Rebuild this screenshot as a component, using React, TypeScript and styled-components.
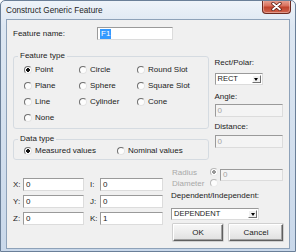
import React from 'react';
import styled, { createGlobalStyle } from 'styled-components';

const GlobalStyle = createGlobalStyle`
  html, body {
    margin: 0;
    padding: 0;
    background: #ffffff;
  }
  * {
    box-sizing: border-box;
  }
`;

const Window = styled.div`
  width: 296px;
  height: 252px;
  display: flex;
  flex-direction: column;
  background: linear-gradient(180deg, #eef3f9 0%, #dde7f2 10%, #c9d8ea 100%);
  border: 1px solid #6a7f98;
  border-radius: 5px 5px 0 0;
  font-family: "Liberation Sans", Arial, sans-serif;
  font-size: 8px;
  color: #1b1b1b;
  overflow: hidden;
`;

const TitleBar = styled.div`
  height: 18px;
  display: flex;
  align-items: flex-start;
  justify-content: space-between;
  padding-left: 5px;
`;

const Title = styled.div`
  font-size: 8.2px;
  line-height: 10px;
  margin-top: 5px;
  color: #1e1e1e;
`;

const CloseButton = styled.div`
  width: 29px;
  height: 14px;
  margin-right: 4px;
  margin-top: -1px;
  display: flex;
  align-items: center;
  justify-content: center;
  border: 1px solid #6e2a20;
  border-top: none;
  border-radius: 0 0 4px 4px;
  background: linear-gradient(180deg, #e9a899 0%, #d9705c 45%, #c0432c 55%, #d1664f 100%);
  box-shadow: inset 0 0 0 1px rgba(255, 255, 255, 0.35);
`;

const Client = styled.div`
  width: 284px;
  height: 230px;
  margin-left: 5px;
  background: #f0f0f0;
  border: 1px solid #8ea2b9;
  padding: 7px 6px 0 6px;
  display: flex;
  flex-direction: column;
`;

const NameRow = styled.div`
  display: flex;
  align-items: center;
  height: 13px;
`;

const NameLabel = styled.span`
  width: 84px;
  line-height: 10px;
`;

const TextInput = styled.div<{ $w: number; $h?: number; $disabled?: boolean }>`
  width: ${(p) => p.$w}px;
  height: ${(p) => p.$h ?? 13}px;
  display: flex;
  align-items: center;
  padding-left: 2px;
  background: ${(p) => (p.$disabled ? '#f4f4f4' : '#ffffff')};
  color: ${(p) => (p.$disabled ? '#a3a3a3' : '#1b1b1b')};
  border: 1px solid;
  border-color: #9a9a9a #dcdcdc #dcdcdc #9a9a9a;
  line-height: 10px;
`;

const Selected = styled.span`
  background: #3399ff;
  color: #ffffff;
  padding: 0 1px;
`;

const Middle = styled.div`
  display: flex;
  margin-top: 11px;
`;

const LeftCol = styled.div`
  width: 197px;
  display: flex;
  flex-direction: column;
`;

const Group = styled.fieldset<{ $pad: number }>`
  margin: 0;
  padding: 0 0 ${(p) => p.$pad}px 0;
  border: 1px solid #d5dbe1;
  border-radius: 3px;
  & + & {
    margin-top: 5px;
  }
`;

const Legend = styled.legend`
  margin-left: 4px;
  padding: 0 2px;
  line-height: 10px;
`;

const RadioGrid = styled.div<{ $cols: string; $row: number }>`
  display: grid;
  grid-template-columns: ${(p) => p.$cols};
  grid-auto-rows: ${(p) => p.$row}px;
  padding-left: 10px;
  padding-top: 1px;
`;

const RadioItem = styled.label<{ $disabled?: boolean }>`
  display: flex;
  align-items: center;
  gap: 3px;
  line-height: 10px;
  color: ${(p) => (p.$disabled ? '#a3a3a3' : 'inherit')};
`;

const RadioDot = styled.span<{ $on?: boolean; $disabled?: boolean }>`
  width: 8px;
  height: 8px;
  border-radius: 50%;
  flex: none;
  border: 1px solid;
  border-color: ${(p) => (p.$disabled ? '#b8b8b8 #ececec #ececec #b8b8b8' : '#6f6f6f #e4e4e4 #e4e4e4 #6f6f6f')};
  background: ${(p) =>
    p.$on
      ? `radial-gradient(circle, ${p.$disabled ? '#9a9a9a' : '#111'} 0 1.6px, #fff 2px)`
      : '#fdfdfd'};
`;

const RightCol = styled.div`
  margin-left: 6px;
  width: 69px;
  padding-top: 7px;
  display: flex;
  flex-direction: column;
`;

const FieldLabel = styled.div<{ $mt?: number }>`
  line-height: 10px;
  margin-top: ${(p) => p.$mt ?? 0}px;
`;

const Spaced = styled.div<{ $mt: number }>`
  margin-top: ${(p) => p.$mt}px;
`;

const Combo = styled.div<{ $w: number }>`
  width: ${(p) => p.$w}px;
  height: 12px;
  display: flex;
  align-items: center;
  justify-content: space-between;
  background: #ffffff;
  border: 1px solid;
  border-color: #9a9a9a #dcdcdc #dcdcdc #9a9a9a;
  padding: 0 1px 0 2px;
  font-size: 7.5px;
  line-height: 10px;
`;

const DropButton = styled.span`
  width: 9px;
  height: 8px;
  display: flex;
  align-items: center;
  justify-content: center;
  background: #f0f0f0;
  border: 1px solid;
  border-color: #ffffff #707070 #707070 #ffffff;
`;

const Triangle = styled.span`
  width: 0;
  height: 0;
  border-left: 2.5px solid transparent;
  border-right: 2.5px solid transparent;
  border-top: 3px solid #000000;
`;

const Bottom = styled.div`
  display: flex;
  margin-top: 1px;
`;

const Coords = styled.div`
  display: grid;
  grid-template-columns: 10px 61px 16px 63px;
  grid-auto-rows: 13px;
  row-gap: 4px;
  margin-top: 17px;
  align-items: center;
`;

const CoordLabel = styled.span<{ $pl?: number }>`
  line-height: 10px;
  padding-left: ${(p) => p.$pl ?? 0}px;
`;

const RightBottom = styled.div`
  margin-left: 8px;
  width: 112px;
  margin-top: 6px;
  display: flex;
  flex-direction: column;
`;

const SizeRow = styled.div`
  display: flex;
  align-items: flex-start;
`;

const SizeLabels = styled.div`
  width: 39px;
  padding-left: 1px;
  display: flex;
  flex-direction: column;
  color: #a8a8a8;
  line-height: 11px;
`;

const SizeRadios = styled.div`
  width: 10px;
  display: flex;
  flex-direction: column;
  gap: 3px;
  padding-top: 1px;
`;

const ButtonRow = styled.div`
  display: flex;
  gap: 6px;
  margin-top: 4px;
  margin-left: 2px;
`;

const Button = styled.button<{ $w: number }>`
  width: ${(p) => p.$w}px;
  height: 17px;
  padding: 0;
  font-family: inherit;
  font-size: 8px;
  color: #1b1b1b;
  background: linear-gradient(180deg, #f6f6f6 0%, #ececec 50%, #e0e0e0 100%);
  border: 1px solid;
  border-color: #ffffff #5f5f5f #5f5f5f #ffffff;
  box-shadow: inset -1px -1px 0 #a0a0a0, 0 0 0 0.5px #b0b0b0;
`;

const featureTypes = [
  ['Point', 'Circle', 'Round Slot'],
  ['Plane', 'Sphere', 'Square Slot'],
  ['Line', 'Cylinder', 'Cone'],
  ['None'],
];

const App = () => {
  return (
    <>
      <GlobalStyle />
      <Window>
        <TitleBar>
          <Title>Construct Generic Feature</Title>
          <CloseButton>
            <svg width="11" height="9" viewBox="0 0 11 9">
              <path d="M2 1.5 L9 7.5 M9 1.5 L2 7.5" stroke="#5a1d14" strokeWidth="3.4" strokeLinecap="round" />
              <path d="M2 1.5 L9 7.5 M9 1.5 L2 7.5" stroke="#ffffff" strokeWidth="1.8" strokeLinecap="round" />
            </svg>
          </CloseButton>
        </TitleBar>
        <Client>
          <NameRow>
            <NameLabel>Feature name:</NameLabel>
            <TextInput $w={76}>
              <Selected>F1</Selected>
            </TextInput>
          </NameRow>

          <Middle>
            <LeftCol>
              <Group $pad={2}>
                <Legend>Feature type</Legend>
                <RadioGrid $cols="55px 58px auto" $row={16}>
                  {featureTypes.flat().map((name) => (
                    <RadioItem key={name}>
                      <RadioDot $on={name === 'Point'} />
                      {name}
                    </RadioItem>
                  ))}
                </RadioGrid>
              </Group>
              <Group $pad={2}>
                <Legend>Data type</Legend>
                <RadioGrid $cols="93px auto" $row={12}>
                  <RadioItem>
                    <RadioDot $on />
                    Measured values
                  </RadioItem>
                  <RadioItem>
                    <RadioDot />
                    Nominal values
                  </RadioItem>
                </RadioGrid>
              </Group>
            </LeftCol>

            <RightCol>
              <FieldLabel>Rect/Polar:</FieldLabel>
              <Spaced $mt={5}>
                <Combo $w={48}>
                  RECT
                  <DropButton>
                    <Triangle />
                  </DropButton>
                </Combo>
              </Spaced>
              <FieldLabel $mt={7}>Angle:</FieldLabel>
              <Spaced $mt={2}>
                <TextInput $w={68} $disabled>0</TextInput>
              </Spaced>
              <FieldLabel $mt={5}>Distance:</FieldLabel>
              <Spaced $mt={3}>
                <TextInput $w={68} $disabled>0</TextInput>
              </Spaced>
            </RightCol>
          </Middle>

          <Bottom>
            <Coords>
              <CoordLabel>X:</CoordLabel>
              <TextInput $w={61}>0</TextInput>
              <CoordLabel $pl={6}>I:</CoordLabel>
              <TextInput $w={63}>0</TextInput>
              <CoordLabel>Y:</CoordLabel>
              <TextInput $w={61}>0</TextInput>
              <CoordLabel $pl={6}>J:</CoordLabel>
              <TextInput $w={63}>0</TextInput>
              <CoordLabel>Z:</CoordLabel>
              <TextInput $w={61}>0</TextInput>
              <CoordLabel $pl={6}>K:</CoordLabel>
              <TextInput $w={63}>1</TextInput>
            </Coords>

            <RightBottom>
              <SizeRow>
                <SizeLabels>
                  <span>Radius</span>
                  <span>Diameter</span>
                </SizeLabels>
                <SizeRadios>
                  <RadioDot $on $disabled />
                  <RadioDot $disabled />
                </SizeRadios>
                <Spaced $mt={2}>
                  <TextInput $w={63} $h={12} $disabled>0</TextInput>
                </Spaced>
              </SizeRow>
              <FieldLabel $mt={2}>Dependent/Independent:</FieldLabel>
              <Spaced $mt={7}>
                <Combo $w={88}>
                  DEPENDENT
                  <DropButton>
                    <Triangle />
                  </DropButton>
                </Combo>
              </Spaced>
              <ButtonRow>
                <Button $w={50}>OK</Button>
                <Button $w={54}>Cancel</Button>
              </ButtonRow>
            </RightBottom>
          </Bottom>
        </Client>
      </Window>
    </>
  );
};

export default App;
